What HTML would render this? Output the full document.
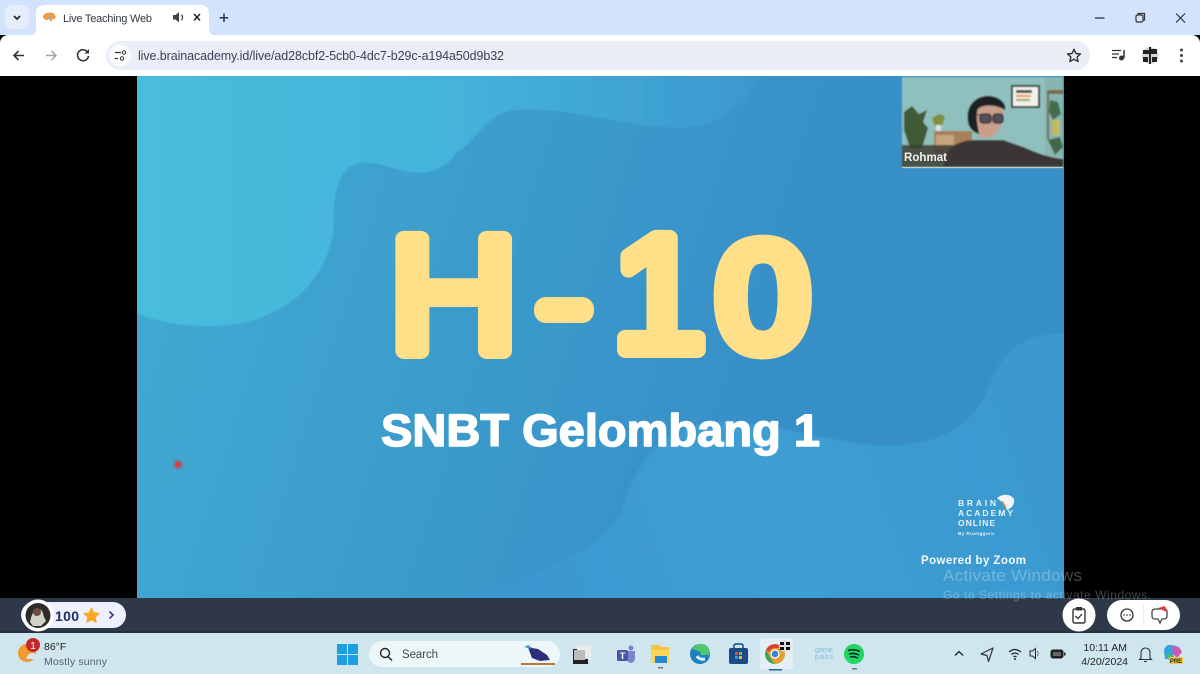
<!DOCTYPE html>
<html><head><meta charset="utf-8"><style>
html,body{margin:0;padding:0;width:1200px;height:674px;overflow:hidden;background:#000}
svg{display:block;position:absolute;left:0;top:0}
text{font-family:"Liberation Sans",sans-serif}
</style></head><body>
<svg width="1200" height="674" viewBox="0 0 1200 674" xmlns="http://www.w3.org/2000/svg">
<defs>
<linearGradient id="bg" gradientUnits="userSpaceOnUse" x1="137" y1="200" x2="760" y2="400"><stop offset="0" stop-color="#42aad2"/><stop offset=".45" stop-color="#3c9ecd"/><stop offset="1" stop-color="#378fc7"/></linearGradient>
<linearGradient id="b1" gradientUnits="userSpaceOnUse" x1="137" y1="150" x2="780" y2="150"><stop offset="0" stop-color="#48bddc"/><stop offset=".5" stop-color="#44b3da"/><stop offset="1" stop-color="#3a96cd"/></linearGradient>
<linearGradient id="b2" gradientUnits="userSpaceOnUse" x1="450" y1="600" x2="1064" y2="400"><stop offset="0" stop-color="#3a96ce"/><stop offset=".5" stop-color="#3c9ed3"/><stop offset="1" stop-color="#3a98cf"/></linearGradient>
<filter id="soft"><feGaussianBlur stdDeviation=".8"/></filter>
<filter id="vid"><feGaussianBlur stdDeviation=".9"/></filter>
</defs>
<rect width="1200" height="35" fill="#d3e3fd"/>
<path d="M28 36 Q36 36 36 28 V14 Q36 5 45 5 H200 Q209 5 209 14 V28 Q209 36 217 36Z" fill="#fff"/>
<rect x="5" y="5" width="24" height="24" rx="8" fill="#e6eefc"/>
<path d="M14 16l3 3 3-3" fill="none" stroke="#1f2937" stroke-width="1.800"/>
<rect y="35" width="1200" height="41" rx="8" fill="#fff"/>
<rect y="42" width="1200" height="34" fill="#fff"/>
<path d="M43 16c2-4 10-5 12-1 2 3-1 5-3 4l-1 3-2-3c-2 2-6 1-6-3z" fill="#f49a3a"/><path d="M48 19l2-4 2 4" fill="none" stroke="#8fb4d0" stroke-width="1"/>
<text x="63" y="22" font-size="11" fill="#33383f" textLength="89">Live Teaching Web</text>
<path d="M199 15h2.500l3.500-3v10.500l-3.500-3H199z" fill="#444" transform="translate(-26 0)"/><path d="M181.500 14.500q2 3 0 6" fill="none" stroke="#444" stroke-width="1.200"/>
<path d="M194 14l6 6.500m0-6.500l-6 6.500" stroke="#222" stroke-width="1.500"/>
<path d="M224 13.500v8.500M219.700 17.700h8.500" stroke="#2b3440" stroke-width="1.500"/>
<path d="M1095 18h9.500" stroke="#333" stroke-width="1.300"/>
<rect x="1136" y="15" width="7" height="7" rx="1.500" fill="none" stroke="#333" stroke-width="1.200"/><path d="M1138 15v-1.500h6.500v6.500H1143" fill="none" stroke="#333" stroke-width="1.200"/>
<path d="M1176 13.500l9 9m0-9l-9 9" stroke="#333" stroke-width="1.200"/>
<path d="M24 55.500H14m4.500-4.500L14 55.500l4.500 4.500" fill="none" stroke="#333" stroke-width="1.600"/>
<path d="M56 55.500H46m5.500-4.500l4.500 4.500-4.500 4.500" fill="none" stroke="#a0a4aa" stroke-width="1.500"/>
<path d="M87.500 52a5.500 5.500 0 1 0 1 4" fill="none" stroke="#333" stroke-width="1.600"/><path d="M89 49v4.500h-4.500z" fill="#333"/>
<rect x="106" y="41" width="984" height="29" rx="14.500" fill="#e9eef8"/>
<circle cx="120" cy="55.500" r="11" fill="#fafbfd"/>
<path d="M115 52.500h6M115 58.500h3" stroke="#333" stroke-width="1.300"/><circle cx="124" cy="52.500" r="1.700" fill="none" stroke="#333"/><circle cx="122" cy="58.500" r="1.700" fill="none" stroke="#333"/>
<text x="138" y="60" font-size="12.500" fill="#3c4350" textLength="366">live.brainacademy.id/live/ad28cbf2-5cb0-4dc7-b29c-a194a50d9b32</text>
<path d="M1074 49.300l1.900 4.200 4.600.5-3.400 3 1 4.500-4.100-2.300-4.100 2.300 1-4.500-3.400-3 4.600-.5z" fill="none" stroke="#333" stroke-width="1.400" stroke-linejoin="round"/>
<path d="M1112 50.500h9M1112 54h7M1112 57.500h5" stroke="#333" stroke-width="1.300"/><path d="M1124 50v8" stroke="#333" stroke-width="1.500"/><circle cx="1121.500" cy="58" r="2.500" fill="#333"/>
<circle cx="1150" cy="55.500" r="8.500" fill="#d8d8d8"/><path d="M1143 50h6v4h-6zM1151 49h6v5h-6zM1143 57h5v5h-5zM1152 57h5v5h-5zM1149 47h2v17h-2z" fill="#222"/>
<circle cx="1181.500" cy="50" r="1.500" fill="#444"/><circle cx="1181.500" cy="55.500" r="1.500" fill="#444"/><circle cx="1181.500" cy="61" r="1.500" fill="#444"/>

<rect y="76" width="1200" height="522" fill="#000"/>
<rect x="137" y="76" width="927" height="522" fill="url(#bg)"/>
<clipPath id="sl"><rect x="137" y="76" width="927" height="522"/></clipPath>
<g clip-path="url(#sl)">
<path d="M130 76H762C745 105 722 124 690 127C630 131 580 106 515 110C480 116 478 142 457 152C445 170 428 176 405 171C385 166 365 158 350 167C336 176 333 200 334 226C330 262 312 288 285 306C258 322 232 327 205 326C175 326 150 320 130 310Z" fill="url(#b1)" filter="url(#soft)"/>
<path d="M1070 333C1010 333 1000 360 985 395C965 435 925 448 875 445C810 440 745 412 695 425C650 438 632 475 622 511C605 545 550 575 433 604H1070Z" fill="url(#b2)" filter="url(#soft)"/>
</g>

<g fill="#ffdf88" stroke="#ffdf88" stroke-linejoin="round" stroke-linecap="round">
<text transform="translate(389.500 351) scale(1.090 1)" stroke-width="16" font-size="163">H</text>
<rect x="534" y="297" width="60" height="26" rx="12" stroke="none"/>
<text transform="translate(612.500 350) scale(1.030 1)" stroke-width="16" font-size="163">1</text>
<text transform="translate(717 349) scale(1.090 1)" stroke-width="18" font-size="151">0</text>
</g>
<text x="381" y="446" font-size="45" font-weight="700" fill="#fff" stroke="#fff" stroke-width="1.500" stroke-linejoin="round" textLength="439" lengthAdjust="spacingAndGlyphs">SNBT Gelombang 1</text>
<circle cx="178" cy="464.500" r="5" fill="#8a6d80" opacity=".75"/><circle cx="178" cy="464.500" r="2.500" fill="#f0323c"/>

<g filter="url(#vid)">
<rect x="902" y="77" width="161" height="91" fill="#8fc0bd"/>
<path d="M1045 77h18v90h-18z" fill="#88b6ae"/>
<path d="M904 112l8-6 7 8 8-4-4 12 5 6-6 20h-12l-6-18z" fill="#3f5a34"/>
<path d="M932 118l7-4 6 2-2 8-4 3-5-2z" fill="#82903d"/><rect x="936" y="125" width="5" height="6" fill="#d8e3dc"/>
<rect x="934" y="131" width="38" height="22" fill="#a97f58"/><rect x="936" y="135" width="18" height="14" fill="#c6a47c"/>
<rect x="902" y="145" width="60" height="22" fill="#3d3d35" opacity=".85"/>
<path d="M1048 90h15v4h-15zM1047 90h2v50h-2z" fill="#7a6a4d"/><path d="M1050 100l8 2 3 12-8 6-4-8z" fill="#3f6d4c"/><rect x="1052" y="120" width="8" height="15" fill="#c7b964"/><path d="M1048 140l12-3 3 10-8 8z" fill="#47654a"/>
<path d="M974 140c-8 0-24 4-27 14l-4 13h120v-8c-18-2-30-8-40-12l-20-7z" fill="#3b3634"/>
<path d="M971 112c0-12 10-18 20-16 10 2 14 12 12 22-2 12-8 20-18 20-8 0-14-10-14-26z" fill="#c79f8b"/>
<path d="M968 122c-3-18 10-27 22-26 10 1 17 8 15 14-8-5-20-6-26-2-4 3-2 14 0 26-6-2-10-6-11-12z" fill="#1f2423"/>
<rect x="980" y="114" width="11" height="9" rx="3" fill="#55505a" stroke="#222" stroke-width="1.300"/><rect x="993" y="114" width="10" height="9" rx="3" fill="#55505a" stroke="#222" stroke-width="1.300"/><path d="M973 114l8 1" stroke="#222"/>
<rect x="1011" y="85" width="29" height="23" fill="#1f2a2e"/><rect x="1013" y="87" width="25" height="19" fill="#f2f2ea"/>
<rect x="1016" y="90" width="16" height="3" fill="#445"/><rect x="1016" y="95" width="15" height="2" fill="#e49533"/><rect x="1016" y="99" width="14" height="2" fill="#98a548"/>
</g>
<path d="M902 167.500h161" stroke="#c8ccc9"/>
<text x="904" y="161" font-size="11.500" font-weight="700" fill="#f3f3ea" textLength="43">Rohmat</text>

<g fill="#e8f2f6" font-weight="700">
<text x="958" y="506" font-size="8.500" textLength="38">BRAIN</text>
<text x="958" y="516" font-size="8.500" textLength="55">ACADEMY</text>
<text x="958" y="526" font-size="8.500" textLength="37">ONLINE</text>
<text x="958" y="535" font-size="4.500" textLength="36">By Ruangguru</text>
</g>
<path d="M997 498c6-5 14-4 17 1 1 5-2 9-7 11l-3-6z" fill="#f2f6f6"/><path d="M1002 501l4 7" stroke="#e08a3a" stroke-width="1.500"/>
<text x="921" y="564" font-size="11.500" font-weight="700" fill="#f4f8fa" textLength="105">Powered by Zoom</text>

<rect y="598" width="1200" height="34" fill="#2f3849"/>
<rect y="631" width="1200" height="2" fill="#26303f"/>
<rect x="21" y="602" width="105" height="26" rx="13" fill="#eef0fb"/>
<circle cx="38" cy="615.500" r="16" fill="#fff"/><circle cx="38" cy="615.500" r="12.500" fill="#2e2b2b"/>
<path d="M30 622c2-8 3-12 8-13 5 0 5 5 6 8l2 4-5 5h-8z" fill="#cfd2c6"/><circle cx="37" cy="612" r="4" fill="#6b4d45"/>
<text x="55" y="621" font-size="14" font-weight="700" fill="#1b2d6b" textLength="24">100</text>
<path d="M91.500 608l2.300 4.800 5.200.7-3.800 3.600 1 5.200-4.700-2.600-4.700 2.600 1-5.200-3.800-3.600 5.200-.7z" fill="#f9a825" stroke="#f9a825" stroke-linejoin="round"/>
<path d="M109.500 611.500l3.500 3.500-3.500 3.500" fill="none" stroke="#1b2d6b" stroke-width="1.500"/>
<circle cx="1079" cy="615" r="16.500" fill="#fff"/>
<rect x="1073" y="609" width="12" height="14" rx="1.500" fill="none" stroke="#333" stroke-width="1.400"/><rect x="1076" y="607" width="6" height="3.500" fill="#333"/><path d="M1075.500 616l2.500 2.500 4-4.500" fill="none" stroke="#333" stroke-width="1.300"/>
<rect x="1107" y="600" width="73" height="30" rx="15" fill="#fff"/>
<path d="M1143.500 604v22" stroke="#eee"/>
<circle cx="1127" cy="615" r="6" fill="none" stroke="#333" stroke-width="1.300"/><path d="M1124 615h.1M1127 615h.1M1130 615h.1" stroke="#333" stroke-width="1.500" stroke-linecap="round"/>
<path d="M1155 609h9q3 0 3 3v4q0 3-3 3h-2l-2 4-2-4h-3q-3 0-3-3v-4q0-3 3-3z" fill="none" stroke="#444" stroke-width="1.300"/><path d="M1158 608l7-2 2 6z" fill="#e53935"/>

<rect y="633" width="1200" height="41" fill="#cfe6ee"/>
<circle cx="27" cy="653" r="9" fill="#f29a30"/><path d="M26 659q2-6 6-6 5 0 6 6z" fill="#d5e6f3"/>
<circle cx="33" cy="645" r="7" fill="#c62828"/><text x="33" y="649" font-size="10" fill="#fff" text-anchor="middle">1</text>
<text x="44" y="650" font-size="10.500" fill="#222">86°F</text>
<text x="44" y="665" font-size="10.500" fill="#54606a" textLength="63">Mostly sunny</text>
<path d="M337 644h10v10h-10zM348 644h10v10h-10zM337 655h10v10h-10zM348 655h10v10h-10z" fill="#1b9fe0"/>
<rect x="369" y="641" width="191" height="26" rx="13" fill="#edf7fa"/>
<circle cx="385" cy="653" r="4.500" fill="none" stroke="#222" stroke-width="1.400"/><path d="M388 656.500l4 4" stroke="#222" stroke-width="1.400"/>
<text x="402" y="658" font-size="11.500" fill="#444" textLength="36">Search</text>
<path d="M527 645l5 3 6 1 9 6 3 5-10 1-8-3-3-8z" fill="#2e2f78"/><path d="M524 647l5-2 2 4z" fill="#3aa3c8"/><path d="M521 664h34" stroke="#b9763f" stroke-width="2"/>
<rect x="573" y="649" width="15" height="15" fill="#222"/><rect x="577" y="645" width="14" height="14" fill="#e9ecee"/><rect x="574" y="650" width="11" height="10" fill="#bbb"/>
<rect x="617" y="650" width="11" height="11" rx="1.500" fill="#4a55a8"/><text x="622.500" y="659" font-size="9" font-weight="700" fill="#fff" text-anchor="middle">T</text><circle cx="631" cy="648" r="2.500" fill="#7b83c9"/><path d="M628 651h7v7q0 4-4 5l-3-1z" fill="#7b83c9"/>
<path d="M651 645h8l2 2h8v15h-18z" fill="#f7c33c"/><rect x="651" y="650" width="18" height="13" fill="#fbd65a"/><rect x="655" y="656" width="12" height="7" fill="#1f88d0"/><rect x="658" y="667" width="5" height="1.500" fill="#777"/>
<circle cx="700" cy="654" r="10" fill="#1f7fc0"/><path d="M692 648q8-7 15-2 4 4 2 9h-9q2-3-2-4-4-1-6-3z" fill="#4ec56f"/><path d="M697 656q2 4 8 3" stroke="#d6eef4" stroke-width="3" fill="none"/>
<rect x="729" y="648" width="19" height="16" rx="2" fill="#1b4a85"/><path d="M734 648v-2q0-2 2-2h5q2 0 2 2v2" fill="none" stroke="#1b4a85" stroke-width="1.500"/><path d="M735 652h3v3h-3z" fill="#ef5030"/><path d="M739 652h3v3h-3z" fill="#7cc530"/><path d="M735 656h3v3h-3z" fill="#1da3e0"/><path d="M739 656h3v3h-3z" fill="#fbbe1c"/>
<rect x="760" y="638" width="33" height="31" rx="3" fill="#e2f0f5"/>
<circle cx="775" cy="654" r="10" fill="#e3a032"/><path d="M766 650a10 10 0 0 1 17-2h-8q-4 0-6 4z" fill="#d8402f"/><path d="M766 650l5 9 4 5a10 10 0 0 1-9-14z" fill="#3aa357"/><circle cx="775" cy="654" r="4" fill="#3b82d6" stroke="#fff" stroke-width="1.200"/>
<circle cx="785" cy="646" r="6" fill="#ddd"/><path d="M780 642h4v3h-4zM786 642h4v3h-4zM780 647h4v3h-4zM786 647h4v3h-4z" fill="#111"/>
<rect x="769" y="669" width="13" height="1.500" fill="#1c6a93"/>
<text x="815" y="652" font-size="7.500" fill="#7dbfd0" textLength="18">game</text><text x="815" y="659" font-size="7.500" fill="#7dbfd0" textLength="18">pass</text>
<circle cx="854" cy="654" r="10" fill="#1ed760"/><path d="M848 650.500q6-2 12 1M849 654q5-1.500 10 1M850 657q4-1 8 1" fill="none" stroke="#123" stroke-width="1.500"/><rect x="852" y="668" width="5" height="1.500" fill="#777"/>
<path d="M955 655.500l4-4 4 4" fill="none" stroke="#222" stroke-width="1.300"/>
<path d="M993 648l-12 6 6 1.500 1.500 6z" fill="none" stroke="#333" stroke-width="1.200" stroke-linejoin="round"/>
<path d="M1009 652q6-5 12 0M1011.500 654.500q3.500-3 7 0M1013.500 657q1.500-1.500 3 0" fill="none" stroke="#222" stroke-width="1.200"/><circle cx="1015" cy="659" r="1" fill="#222"/>
<path d="M1030 651h2.500l3-2.500v10l-3-2.500H1030z" fill="none" stroke="#222"/><path d="M1037.500 651q1.500 2.500 0 5" fill="none" stroke="#777"/>
<rect x="1051" y="650" width="12" height="8" rx="2" fill="#222" stroke="#222"/><rect x="1053" y="652" width="8" height="4" fill="#666"/><rect x="1064" y="652.500" width="1.500" height="3" fill="#222"/>
<text x="1127" y="651" font-size="10.500" fill="#222" text-anchor="end">10:11 AM</text>
<text x="1128" y="665" font-size="10.500" fill="#222" text-anchor="end">4/20/2024</text>
<path d="M1141 658v-5.500a4.500 4.500 0 0 1 9 0v5.500l1.500 1.500h-12z" fill="none" stroke="#333" stroke-width="1.100"/><path d="M1144 661.500h3" stroke="#333"/>
<path d="M1164 650q2-6 7-5l6 1-2 8-7 5h-3z" fill="#2ea3dc"/><path d="M1172 646l7 1 3 5-5 6-4-4z" fill="#d455b8"/><path d="M1166 655l6-1 3 4-5 4z" fill="#52b86a"/><rect x="1169" y="657" width="14" height="7" rx="1" fill="#f6c93d"/><text x="1176" y="663" font-size="6" font-weight="700" fill="#222" text-anchor="middle">PRE</text>

<g fill="#fff" opacity=".27">
<text x="943" y="581" font-size="17" textLength="139">Activate Windows</text>
<text x="943" y="599" font-size="12" textLength="208">Go to Settings to activate Windows.</text>
</g>
</svg>
</body></html>
